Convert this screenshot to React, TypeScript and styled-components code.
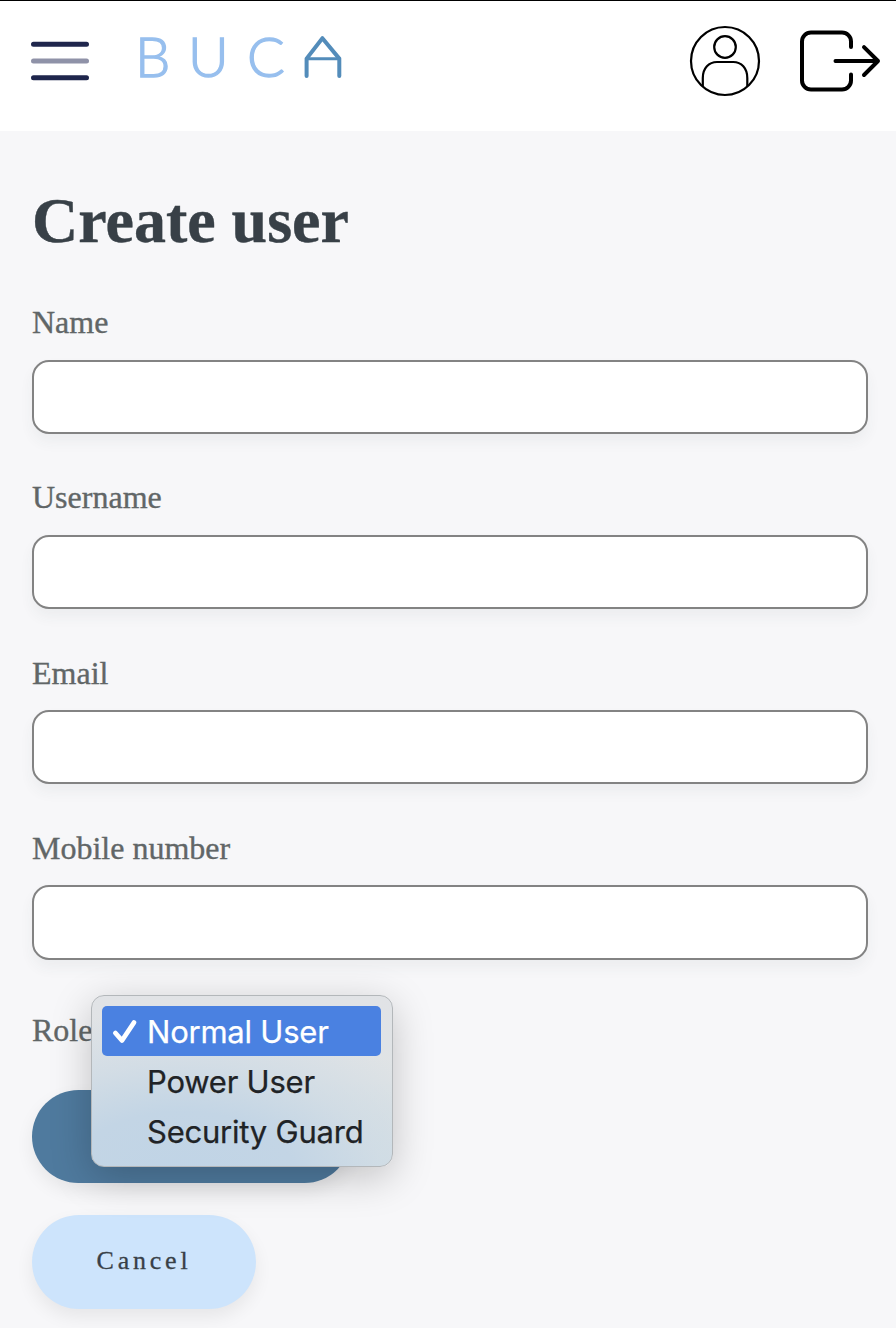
import React from "react";
import styled, { createGlobalStyle } from "styled-components";

const GlobalStyle = createGlobalStyle`
  *, *::before, *::after { box-sizing: border-box; }
  body {
    margin: 0;
    background: #f7f7f9;
    font-family: "Liberation Serif", "Times New Roman", serif;
    color: #384047;
  }
`;

const Page = styled.div`
  display: flex;
  flex-direction: column;
  min-height: 1328px;
  overflow: hidden;
`;

const Header = styled.header`
  display: flex;
  justify-content: space-between;
  align-items: flex-start;
  height: 131px;
  padding: 24px 14px 0 29px;
  border-top: 1px solid #000;
  background: #fff;
`;

const HeaderGroup = styled.div<{ $gap: number }>`
  display: flex;
  align-items: flex-start;
  gap: ${(p) => p.$gap}px;
`;

const Logo = styled.div`
  display: flex;
  align-items: flex-start;
  height: 72px;
`;

const LogoLetter = styled.span<{ $width: number }>`
  width: ${(p) => p.$width}px;
  font: 300 56px/62px Lato, sans-serif;
  color: #97bfee;
  -webkit-text-stroke: 1.4px #97bfee;
`;

const IconButton = styled.button`
  display: block;
  padding: 0;
  border: 0;
  background: none;
  line-height: 0;
`;

const Form = styled.form`
  display: flex;
  flex-direction: column;
  align-items: stretch;
  padding: 53px 28px 19px 32px;
`;

const Title = styled.h1`
  margin: 0 0 46px;
  font-size: 64px;
  line-height: 74px;
  font-weight: 700;
  -webkit-text-stroke: 0.4px currentColor;
`;

const Label = styled.label`
  font-size: 32px;
  line-height: 36px;
  color: #616667;
  -webkit-text-stroke: 0.35px currentColor;
`;

const Field = styled.div`
  display: flex;
  flex-direction: column;
  gap: 20px;
  margin-bottom: 45px;

  &:nth-of-type(n + 3) {
    gap: 19px;
  }

  &:nth-of-type(3) {
    padding-top: 1px;
  }

  &:nth-of-type(4) {
    padding-top: 1px;
    margin-bottom: 44px;
  }
`;

const Input = styled.input<{ $tall?: boolean }>`
  width: 100%;
  height: ${(p) => (p.$tall ? 75 : 74)}px;
  padding: 0 20px;
  border: 2px solid #838383;
  border-radius: 17px;
  background: #fff;
  box-shadow: 0 8px 14px rgba(56, 64, 71, 0.055);
  font: 32px "Liberation Serif", serif;
  outline: none;
`;

const RoleRow = styled.div`
  position: relative;
  z-index: 1;
  display: flex;
  margin: 8px 0 42px;
`;

const Menu = styled.ul`
  position: absolute;
  left: 59px;
  top: -17px;
  width: 302px;
  height: 172px;
  margin: 0;
  padding: 10px;
  list-style: none;
  border: 1px solid #b3b7ba;
  border-radius: 13px;
  background:
    radial-gradient(ellipse 290px 170px at 30% 108%, #c0d4e6 0%, #c3d5e5 40%, rgba(205, 218, 229, 0.7) 68%, rgba(224, 227, 230, 0) 100%),
    linear-gradient(180deg, #e1e3e6 0%, #dfe3e5 50%, #d5e0e4 100%);
  box-shadow: 0 10px 40px rgba(0, 0, 0, 0.22);
`;

const Option = styled.li<{ $selected?: boolean }>`
  display: flex;
  align-items: center;
  width: 279px;
  height: 50px;
  padding: 2px 0 0 10px;
  border-radius: 5px;
  background: ${(p) => (p.$selected ? "#4a81e1" : "transparent")};
  color: ${(p) => (p.$selected ? "#fff" : "#202326")};
  font: 400 31px/48px Inter, sans-serif;
  letter-spacing: -0.22px;
  -webkit-text-stroke: 0.25px currentColor;
  white-space: nowrap;
`;

const CheckSlot = styled.span`
  display: flex;
  flex: 0 0 35px;
`;

const Button = styled.button<{ $primary?: boolean }>`
  width: ${(p) => (p.$primary ? 319 : 224)}px;
  height: ${(p) => (p.$primary ? 93 : 94)}px;
  margin-bottom: ${(p) => (p.$primary ? 32 : 0)}px;
  padding: 0 0 3px;
  border: 0;
  border-radius: 47px;
  background: ${(p) => (p.$primary ? "#4f7a9e" : "#cde4fc")};
  box-shadow: 0 8px 18px rgba(0, 0, 0, 0.07);
  color: #384047;
  font: 26px "Liberation Serif", serif;
  letter-spacing: 3.8px;
  -webkit-text-stroke: 0.3px currentColor;
`;

const MenuIcon = () => (
  <svg width="64" height="72" viewBox="0 0 64 72" fill="none" strokeWidth="5" strokeLinecap="round">
    <path d="M4.5 19.3H57.5M4.5 52.7H57.5" stroke="#1f264c" />
    <path d="M4.5 36H57.5" stroke="#8f92a8" />
  </svg>
);

const HouseMark = () => (
  <svg width="42" height="60" viewBox="0 0 42 60" fill="none" stroke="#538cba" strokeLinecap="round" strokeLinejoin="round">
    <path d="M4.6 51V33.6L20.4 13.2L37.3 33.6V51" strokeWidth="4" />
    <path d="M4.6 33.8H37.3" strokeWidth="3" />
  </svg>
);

const ProfileIcon = () => (
  <svg width="72" height="72" viewBox="0 0 72 72" fill="none" stroke="#000" strokeWidth="2.2">
    <circle cx="36" cy="36" r="34" />
    <circle cx="36" cy="22" r="10.8" />
    <path d="M13.8 61V53C13.8 43 20 37 28 37H44.3C52.3 37 58.3 43 58.3 53V61" />
  </svg>
);

const LogoutIcon = () => (
  <svg width="84" height="72" viewBox="0 0 84 72" fill="none" stroke="#000" strokeWidth="4" strokeLinecap="round" strokeLinejoin="round">
    <path d="M53 22V16.500C53 11.500 49 7.500 44 7.500H13C8 7.500 4 11.500 4 16.500V55.500C4 60.500 8 64.500 13 64.500H44C49 64.500 53 60.500 53 55.500V49.500" />
    <path d="M37.500 36H80M66 22.200L80 36L66 50" />
  </svg>
);

const CheckIcon = () => (
  <svg width="26" height="26" viewBox="0 0 26 26" fill="none" stroke="#fff" strokeWidth="4.8" strokeLinecap="round" strokeLinejoin="round">
    <path d="M3.400 14L10 21.500L22 3.500" />
  </svg>
);

const fields = ["Name", "Username", "Email", "Mobile number"];
const roles = ["Normal User", "Power User", "Security Guard"];

export default function App() {
  return (
    <Page>
      <GlobalStyle />
      <Header>
        <HeaderGroup $gap={42}>
          <IconButton aria-label="Menu"><MenuIcon /></IconButton>
          <Logo>
            <LogoLetter $width={53}>B</LogoLetter>
            <LogoLetter $width={59}>U</LogoLetter>
            <LogoLetter $width={55}>C</LogoLetter>
            <HouseMark />
          </Logo>
        </HeaderGroup>
        <HeaderGroup $gap={37}>
          <IconButton aria-label="Profile"><ProfileIcon /></IconButton>
          <IconButton aria-label="Log out"><LogoutIcon /></IconButton>
        </HeaderGroup>
      </Header>
      <Form>
        <Title>Create user</Title>
        {fields.map((name, i) => (
          <Field key={name}>
            <Label htmlFor={name}>{name}</Label>
            <Input id={name} $tall={i === fields.length - 1} />
          </Field>
        ))}
        <RoleRow>
          <Label>Role</Label>
          <Menu>
            {roles.map((role, i) => (
              <Option key={role} $selected={i === 0}>
                <CheckSlot>{i === 0 && <CheckIcon />}</CheckSlot>
                {role}
              </Option>
            ))}
          </Menu>
        </RoleRow>
        <Button type="button" $primary aria-label="Create user" />
        <Button type="button">Cancel</Button>
      </Form>
    </Page>
  );
}
